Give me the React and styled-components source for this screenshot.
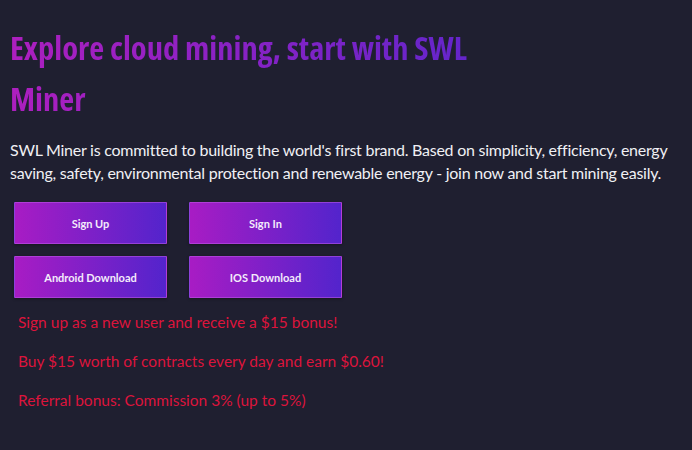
import React from 'react';
import styled, { createGlobalStyle } from 'styled-components';

const GlobalStyle = createGlobalStyle`
  html, body {
    margin: 0;
    padding: 0;
    background: #1f1f30;
  }
  body {
    font-family: Lato, 'Open Sans', sans-serif;
  }
`;

const Page = styled.div`
  min-height: 450px;
  background: #1f1f30;
  padding: 22px 10px 0;
  box-sizing: border-box;
`;

const Title = styled.h1`
  margin: 0;
  max-width: 520px;
  font-family: 'Open Sans', Lato, sans-serif;
  font-stretch: 87.5%;
  font-size: 32.5px;
  font-weight: 700;
  line-height: 51px;
  background: linear-gradient(90deg, #ad1fbf 0%, #5a26cc 100%);
  -webkit-background-clip: text;
  background-clip: text;
  color: transparent;
`;

const Intro = styled.p`
  margin: 14px 0 0;
  color: #f0f0f4;
  font-size: 16px;
  line-height: 23px;
  letter-spacing: -0.25px;
`;

const Actions = styled.div`
  display: grid;
  grid-template-columns: repeat(2, 153px);
  column-gap: 22px;
  row-gap: 12px;
  margin: 18px 0 0 4px;
`;

const ActionButton = styled.button`
  height: 42px;
  border: 1px solid rgba(190, 90, 230, 0.55);
  border-radius: 1px;
  background: linear-gradient(90deg, #a81cc4 0%, #5324cc 100%);
  color: #f4ecfb;
  font-family: inherit;
  font-size: 11px;
  font-weight: 700;
  cursor: pointer;
  box-shadow: 0 1px 3px rgba(0, 0, 0, 0.35);
`;

const Perks = styled.div`
  display: flex;
  flex-direction: column;
  gap: 17px;
  margin: 13px 0 0 8px;
`;

const Perk = styled.p`
  margin: 0;
  color: #dc143c;
  font-size: 15.5px;
  line-height: 22px;
`;

export default function App() {
  return (
    <>
      <GlobalStyle />
      <Page>
        <Title>Explore cloud mining, start with SWL Miner</Title>
        <Intro>
          SWL Miner is committed to building the world's first brand. Based on simplicity, efficiency, energy
          saving, safety, environmental protection and renewable energy - join now and start mining easily.
        </Intro>
        <Actions>
          <ActionButton>Sign Up</ActionButton>
          <ActionButton>Sign In</ActionButton>
          <ActionButton>Android Download</ActionButton>
          <ActionButton>IOS Download</ActionButton>
        </Actions>
        <Perks>
          <Perk>Sign up as a new user and receive a $15 bonus!</Perk>
          <Perk>Buy $15 worth of contracts every day and earn $0.60!</Perk>
          <Perk>Referral bonus: Commission 3% (up to 5%)</Perk>
        </Perks>
      </Page>
    </>
  );
}
